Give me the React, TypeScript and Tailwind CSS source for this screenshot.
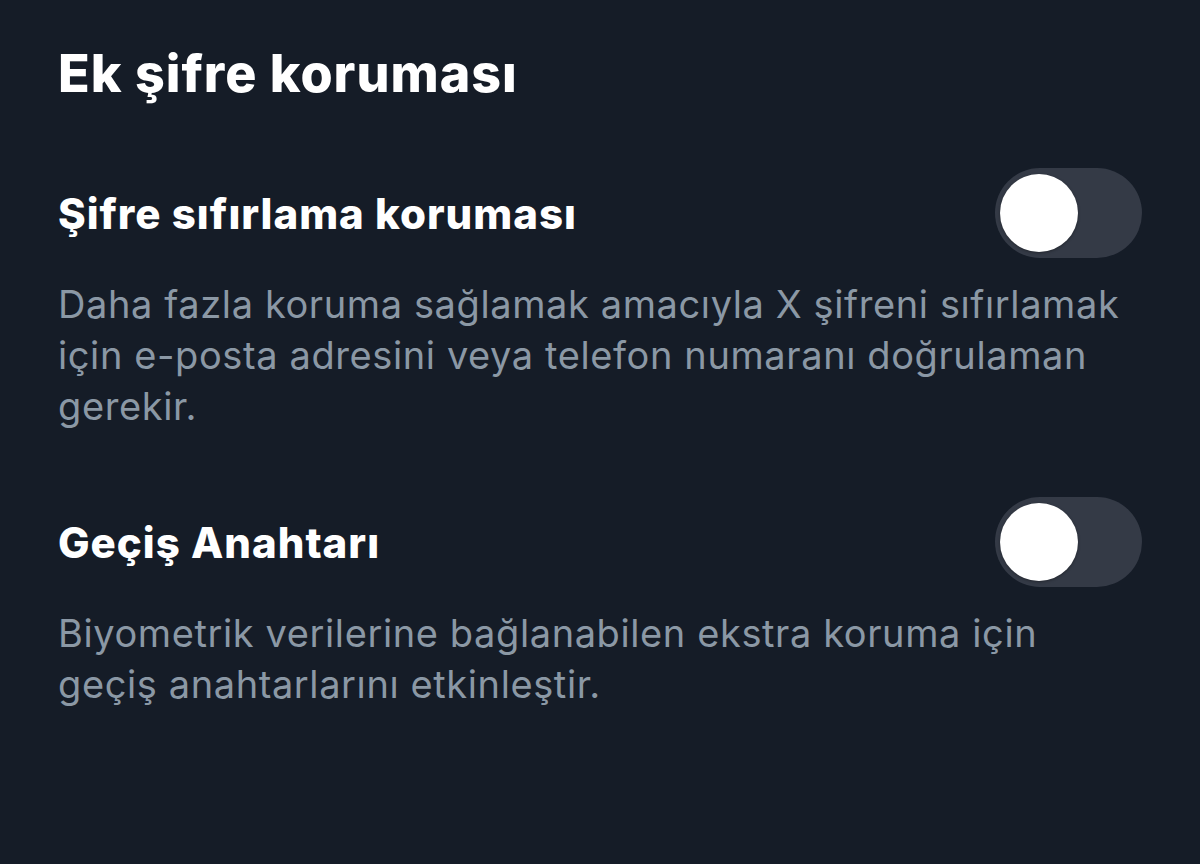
import React from 'react';

const sections = [
    {
        title: 'Şifre sıfırlama koruması',
        description:
            'Daha fazla koruma sağlamak amacıyla X şifreni sıfırlamak için e-posta adresini veya telefon numaranı doğrulaman gerekir.',
    },
    {
        title: 'Geçiş Anahtarı',
        description: 'Biyometrik verilerine bağlanabilen ekstra koruma için geçiş anahtarlarını etkinleştir.',
    },
];

function Toggle() {
    return (
        <div className="flex h-[90px] w-[147px] shrink-0 items-center rounded-full bg-[#343a46] px-[5px]">
            <div className="h-[78px] w-[78px] rounded-full bg-white shadow-[0_1px_3px_rgba(0,0,0,0.35)]" />
        </div>
    );
}

export default function App() {
    return (
        <div
            className="min-h-screen bg-[#151c27] px-[58px] pt-[46px] text-white"
            style={{ fontFamily: 'Inter, "Noto Sans", sans-serif' }}
        >
            <h1 className="text-[52px] font-extrabold leading-[56px] tracking-[1px]">Ek şifre koruması</h1>
            <div className="mt-[66px] flex flex-col gap-[65px]">
                {sections.map((s) => (
                    <div key={s.title}>
                        <div className="flex items-center justify-between">
                            <h2 className="text-[42px] font-extrabold tracking-[1px]">{s.title}</h2>
                            <Toggle />
                        </div>
                        <p className="mt-[21px] max-w-[1075px] text-[38px] leading-[51px] tracking-[0.6px] text-[#8b98a5]">
                            {s.description}
                        </p>
                    </div>
                ))}
            </div>
        </div>
    );
}
